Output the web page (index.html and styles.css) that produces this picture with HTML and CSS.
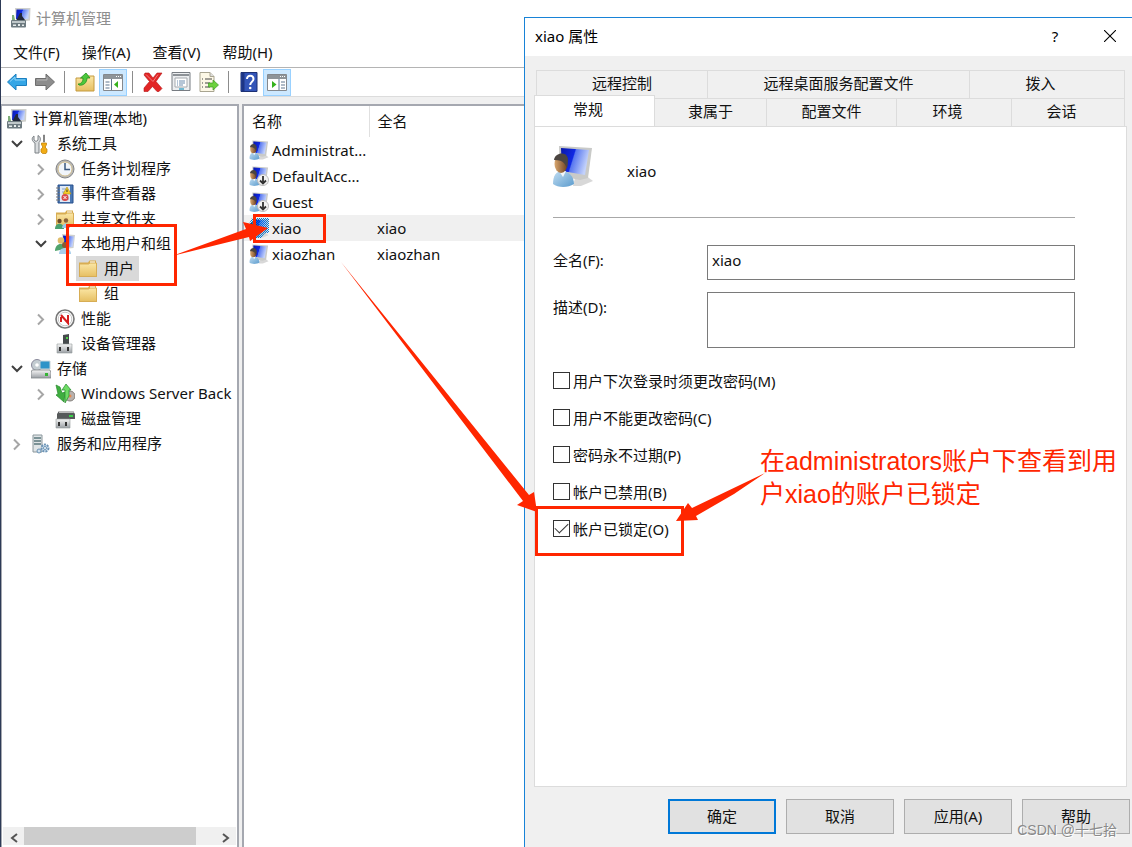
FILE: index.html
```html
<!DOCTYPE html>
<html lang="zh-CN">
<head>
    <meta charset="UTF-8">
    <meta name="viewport" content="width=device-width, initial-scale=1.0">
    <title>计算机管理</title>
    <link rel="stylesheet" href="styles.css">
</head>
<body>
    <!-- Shared icons -->
    <svg class="sprite" aria-hidden="true">
        <defs>
            <linearGradient id="screen" x1="0" y1="0" x2="1" y2="0.3">
                <stop offset="0" stop-color="#0a18a8"/>
                <stop offset="0.48" stop-color="#1029e4"/>
                <stop offset="0.52" stop-color="#5877f0"/>
                <stop offset="1" stop-color="#c3d2fb"/>
            </linearGradient>
            <linearGradient id="gold" x1="0" y1="0" x2="0" y2="1">
                <stop offset="0" stop-color="#fbe7a6"/>
                <stop offset="1" stop-color="#e6bf62"/>
            </linearGradient>
            <linearGradient id="steel" x1="0" y1="0" x2="0" y2="1">
                <stop offset="0" stop-color="#f6f6f6"/>
                <stop offset="1" stop-color="#9a9fa4"/>
            </linearGradient>
            <linearGradient id="skin" x1="0" y1="0" x2="1" y2="0">
                <stop offset="0" stop-color="#d9a76f"/>
                <stop offset="1" stop-color="#6b4020"/>
            </linearGradient>
            <linearGradient id="shirt" x1="0" y1="0" x2="1" y2="1">
                <stop offset="0" stop-color="#c2def2"/>
                <stop offset="1" stop-color="#5b9bcd"/>
            </linearGradient>
            <pattern id="dots" width="2" height="2" patternUnits="userSpaceOnUse">
                <path d="M0 0h1v1H0zM1 1h1v1H1z" fill="#0078d7"/>
            </pattern>
            <symbol id="i-computer" viewBox="0 0 20 20">
                <path d="M4 0h15.500l-.5 12.500-4 .5v3H8l-3-4z" fill="#cfd0cc"/>
                <path d="M5.500 1.500H18l-.6 9.500H5z" fill="url(#screen)"/>
                <path d="M9 5h2v3l3 4H8l-3 1z" fill="#23283a"/>
                <path d="M1 7h2l1 5H1z" fill="#7fae78"/>
                <rect y="12" width="15" height="7.500" rx="1" fill="#6d7a80"/>
                <path d="M1 13h13v2H1z" fill="#c0c8ca"/>
                <path d="M2 16.500h3v1.500H2zM7 16h2v2H7zM11 16.500h2v1.500h-2z" fill="#e9eeee"/>
            </symbol>
            <symbol id="i-user" viewBox="0 0 40 42">
                <path d="M22 33l10-3 8 6-12 5H20z" fill="#d8d8d8"/>
                <path d="M6 1l33 2-4 30-8 2-20-4z" fill="#c9cac8"/>
                <path d="M8 3l28 2-4 25-23-4z" fill="url(#screen)"/>
                <path d="M0 39c0-8 3-13 9-13s12 5 12 13c-6 4-16 4-21 0z" fill="url(#shirt)"/>
                <path d="M6 26l4 6 3-6z" fill="#f4f8fb"/>
                <ellipse cx="8" cy="19" rx="6.500" ry="9" fill="url(#skin)"/>
                <path d="M1 15c1-8 14-9 14 0l-1 8c-2-3-2-8-13-8z" fill="#4b4540"/>
            </symbol>
            <symbol id="i-down" viewBox="0 0 20 20">
                <circle cx="14" cy="14" r="5.500" fill="#f3f3f3" stroke="#bcbcbc"/>
                <path d="M14 10v7M11 14.500l3 3 3-3" fill="none" stroke="#333" stroke-width="1.800"/>
            </symbol>
            <symbol id="i-picked" viewBox="0 0 20 20">
                <path d="M3 0h17v15h-4l-4 5H0V6z" fill="url(#dots)"/>
            </symbol>
            <symbol id="i-tools" viewBox="0 0 20 20">
                <path d="M3 2v4l2 1.500L7 6V1.500c3 1.500 3 5 1 7V19H4V9C1 7.500 0 4 3 2z" fill="#d9dcde" stroke="#7d8286"/>
                <path d="M12.500 1l1 0v7h-1z" fill="#777" stroke="#777" stroke-width=".8"/>
                <path d="M10.500 9h5v2l-1 1v2l1.500 1v3l-1 1.500h-3.500L10 18v-3l1.500-1v-2l-1-1z" fill="#f2ac14" stroke="#b97c08" stroke-width=".7"/>
            </symbol>
            <symbol id="i-clock" viewBox="0 0 20 20">
                <circle cx="10" cy="10" r="9" fill="#b9b9b9" stroke="#858585"/>
                <circle cx="10" cy="10" r="7" fill="#f1f5fa" stroke="#d0b77a" stroke-width=".8"/>
                <path d="M10 4v6.500h5" fill="none" stroke="#3a587f" stroke-width="1.500"/>
            </symbol>
            <symbol id="i-event" viewBox="0 0 20 20">
                <path d="M3 1h15v18H3z" fill="#4a78b4" stroke="#274f8b"/>
                <path d="M5 2h10v16H5z" fill="#dfe9f7"/>
                <path d="M1 4h4M1 7h4M1 10h4M1 13h4M1 16h4" stroke="#777"/>
                <path d="M7 5h6M7 8h6M7 15h7" stroke="#8ba4c4"/>
                <path d="M12 3l4 7H8z" fill="#f8cf2a" stroke="#b28d10" stroke-width=".6"/>
                <path d="M12 5.500v2.500" stroke="#333"/>
                <circle cx="10" cy="13.500" r="3.500" fill="#d94b4b"/>
                <path d="M8.500 12l3 3m0-3l-3 3" stroke="#fff"/>
            </symbol>
            <symbol id="i-folder" viewBox="0 0 20 20">
                <path d="M1 3.500h9l1.500-2H18v3h1V18H1z" fill="#d9ae51"/>
                <path d="M12 2.500h5v2h-5z" fill="#fff"/>
                <path d="M1.500 5h9l1.500-1h6.500v13.500h-17z" fill="url(#gold)" stroke="#d7ad55"/>
            </symbol>
            <symbol id="i-people" viewBox="0 0 20 20">
                <circle cx="4.500" cy="12" r="2.200" fill="#6e4c2a"/>
                <path d="M0 20c0-7 9-7 9 0z" fill="#49a06f"/>
                <circle cx="11" cy="11.500" r="2.200" fill="#8a6238"/>
                <path d="M7 19c0-6 8-6 8 0z" fill="#9cc6e6"/>
            </symbol>
            <symbol id="i-group" viewBox="0 0 20 20">
                <path d="M7 0l13 1-1.500 13-9 1z" fill="#cfd0ce"/>
                <path d="M8 1.500l11 1-1.500 10.500-8 0z" fill="url(#screen)"/>
                <circle cx="6" cy="6.500" r="3.300" fill="#e0bd6c"/>
                <path d="M0 17c0-9 10-9 10-2z" fill="#4fa36d"/>
                <circle cx="10" cy="11" r="3" fill="#8a5b35"/>
                <path d="M4 20c0-8 12-8 12 0z" fill="#a8cfec"/>
            </symbol>
            <symbol id="i-gauge" viewBox="0 0 20 20">
                <circle cx="10" cy="10" r="9" fill="#fff" stroke="#777" stroke-width="1.600"/>
                <circle cx="10" cy="10" r="6.800" fill="#fff" stroke="#c6c6c6"/>
                <path d="M6 13V8M6 6l7 8V6" fill="none" stroke="#d61c1c" stroke-width="2"/>
            </symbol>
            <symbol id="i-device" viewBox="0 0 20 20">
                <path d="M8 1l6-1v10H8z" fill="#454a4c"/>
                <path d="M11 3h2v2h-2z" fill="#4ed04b"/>
                <path d="M2 10h15v9H2z" fill="url(#steel)" stroke="#969a9c" stroke-width=".6"/>
                <path d="M4 13h2v4H4zM12 13h2v4h-2z" fill="#333"/>
            </symbol>
            <symbol id="i-storage" viewBox="0 0 20 20">
                <circle cx="6" cy="6" r="5.500" fill="#c3ccd1" stroke="#889"/>
                <circle cx="6" cy="6" r="1.800" fill="#fff"/>
                <path d="M9 2h10v8H9z" fill="#2d93c8" stroke="#c8d4da"/>
                <path d="M1 11h18l1 3v5H0v-5z" fill="url(#steel)" stroke="#84898c" stroke-width=".8"/>
                <path d="M14 14h3v3h-3z" fill="#36b436"/>
            </symbol>
            <symbol id="i-backup" viewBox="0 0 20 20">
                <circle cx="15" cy="12" r="5" fill="#b8b1ae" stroke="#84807c"/>
                <circle cx="15" cy="12" r="1.500" fill="#e98a4e"/>
                <path d="M1 1l4 2 2 6 3-1-1 10-8-7 2-1z" fill="#3fae40" stroke="#278b2b" stroke-width=".7"/>
                <path d="M11 0l5 6h-2v6l-4 7V6H7z" fill="#6fdc66" stroke="#278b2b" stroke-width=".7"/>
            </symbol>
            <symbol id="i-disk" viewBox="0 0 20 20">
                <path d="M4 2h14l2 3v5H2V5z" fill="#56595a"/>
                <path d="M4 2h14l1 2H4z" fill="#bbb"/>
                <path d="M14 6h4v2h-4z" fill="#3bd04a"/>
                <path d="M1 10h14v9H1z" fill="url(#steel)" stroke="#969a9c" stroke-width=".6"/>
                <path d="M3 13h2v4H3zM10 13h2v4h-2z" fill="#333"/>
            </symbol>
            <symbol id="i-service" viewBox="0 0 20 20">
                <path d="M2 1h9v17H2z" fill="#dfe4e6" stroke="#8b979c"/>
                <path d="M3 4h7M3 7h7M3 10h7" stroke="#5b777c" stroke-width="1.400"/>
                <circle cx="14" cy="14" r="3.500" fill="#cfe0ee" stroke="#6b93b5" stroke-width="2" stroke-dasharray="2 1"/>
                <circle cx="14" cy="14" r="1.500" fill="#fff" stroke="#6b93b5"/>
                <circle cx="8" cy="17" r="2" fill="#cfe0ee" stroke="#6b93b5"/>
            </symbol>
            <symbol id="i-open" viewBox="0 0 20 20">
                <path d="M5 7l5 5 5-5" fill="none" stroke="#404040" stroke-width="2"/>
            </symbol>
            <symbol id="i-closed" viewBox="0 0 20 20">
                <path d="M7 5.500l5 5-5 5" fill="none" stroke="#a6a6a6" stroke-width="2"/>
            </symbol>
        </defs>
    </svg>

    <main class="console">
        <header class="console-title">
            <svg class="icon"><use href="#i-computer"/></svg>
            <span>计算机管理</span>
        </header>

        <nav class="menu">
            <button type="button">文件(F)</button>
            <button type="button">操作(A)</button>
            <button type="button">查看(V)</button>
            <button type="button">帮助(H)</button>
        </nav>

        <div class="toolbar">
            <button type="button" aria-label="后退">
                <svg class="icon" viewBox="0 0 20 20"><path d="M.5 10L9 2v4.500h10.500v7H9V18z" fill="#35a6e6" stroke="#1b7fc0"/><path d="M3 9.500L8 5v3h10" fill="none" stroke="#8fd4f7"/></svg>
            </button>
            <button type="button" aria-label="前进">
                <svg class="icon" viewBox="0 0 20 20"><path d="M19.500 10L11 2v4.500H.5v7H11V18z" fill="#8d8d8d" stroke="#6e6e6e"/><path d="M2 8h10V5" fill="none" stroke="#b5b5b5"/></svg>
            </button>
            <i class="divider"></i>
            <button type="button" aria-label="上一级">
                <svg class="icon" viewBox="0 0 20 20"><path d="M1 6h8l2-2h8v15H1z" fill="url(#gold)" stroke="#c49a3e"/><path d="M3 12c3 0 5-2 5-6H5.500L11 1l4 5h-3c0 5-4 8-8 7z" fill="#4cc83c" stroke="#248f20" stroke-width=".8"/></svg>
            </button>
            <button type="button" class="active" aria-label="显示控制台树">
                <svg class="icon" viewBox="0 0 20 20"><path d="M.5 2.500h19v16H.5z" fill="#fff" stroke="#84888d"/><path d="M1 3h18v4H1z" fill="#8e9499"/><path d="M13 4.500h1m1 0h1m1 0h1" stroke="#fff"/><path d="M8.500 7v11M2.500 10h4M2.500 13h4M2.500 16h4" stroke="#5f7691"/><path d="M15 9v7l-4-3.500z" fill="#35b21c"/></svg>
            </button>
            <i class="divider"></i>
            <button type="button" aria-label="删除">
                <svg class="icon" viewBox="0 0 20 20"><path d="M2 1h4l4 5 4-5h5l-6 8.500 6 7-3 3h-2l-4.500-5L5 19.500H1V16l5.500-6.500L1 3z" fill="#e22525" stroke="#b51616" stroke-width=".6"/><path d="M3 2.500l7 7 5-7" fill="none" stroke="#f47c7c"/></svg>
            </button>
            <button type="button" aria-label="属性">
                <svg class="icon" viewBox="0 0 20 20"><path d="M1 .5h18v18H1z" fill="#eceef0" stroke="#777c82"/><path d="M2 3h16" stroke="#8d9297" stroke-width="2"/><path d="M4 6h12v9H4z" fill="#fff" stroke="#a4a9ae"/><path d="M6 9h1m1 0h6M6 11h1m1 0h6M6 13h1m1 0h4" stroke="#6c8cae"/><path d="M8 17h5" stroke="#4aa7c9" stroke-width="1.500"/></svg>
            </button>
            <button type="button" aria-label="导出列表">
                <svg class="icon" viewBox="0 0 20 20"><path d="M1 .5h10l4 4v15H1z" fill="#fdf8e6" stroke="#a9a591"/><path d="M11 .5v4h4" fill="#ddd" stroke="#a9a591"/><path d="M3 7h1m2 0h7M3 11h1m2 0h5M3 15h1m2 0h5" stroke="#444"/><path d="M9.500 11H14V8l5.500 5L14 18v-3H9.500z" fill="#6cd13d" stroke="#3c9a22" stroke-width=".7"/></svg>
            </button>
            <i class="divider"></i>
            <button type="button" aria-label="帮助">
                <svg class="icon" viewBox="0 0 20 20"><path d="M2 .5h16v19H2z" fill="#3355b8" stroke="#1d3175"/><path d="M2.500 1h3v18h-3z" fill="#1d3585"/><path d="M8 7c0-4.500 6.500-4 6.500 0 0 3-3.300 2.500-3.300 6" fill="none" stroke="#fff" stroke-width="2"/><circle cx="11.200" cy="16" r="1.300" fill="#fff"/></svg>
            </button>
            <button type="button" class="active" aria-label="显示操作窗格">
                <svg class="icon" viewBox="0 0 20 20"><path d="M.5 2.500h19v16H.5z" fill="#fff" stroke="#84888d"/><path d="M1 3h18v4H1z" fill="#8e9499"/><path d="M13 4.500h1m1 0h1m1 0h1" stroke="#fff"/><path d="M12 7v11M14 10h4M14 13h4M14 16h4" stroke="#5f7691"/><path d="M5 9v7l4.500-3.500z" fill="#35b21c"/></svg>
            </button>
        </div>

        <div class="panes">
            <section class="tree-pane">
                <ul class="tree">
                    <li class="root"><svg class="icon"><use href="#i-computer"/></svg><span>计算机管理(本地)</span></li>
                    <li class="l1"><svg class="chevron"><use href="#i-open"/></svg><svg class="icon"><use href="#i-tools"/></svg><span>系统工具</span></li>
                    <li class="l2"><svg class="chevron"><use href="#i-closed"/></svg><svg class="icon"><use href="#i-clock"/></svg><span>任务计划程序</span></li>
                    <li class="l2"><svg class="chevron"><use href="#i-closed"/></svg><svg class="icon"><use href="#i-event"/></svg><span>事件查看器</span></li>
                    <li class="l2"><svg class="chevron"><use href="#i-closed"/></svg><svg class="icon"><use href="#i-folder"/><use href="#i-people"/></svg><span>共享文件夹</span></li>
                    <li class="l2"><svg class="chevron"><use href="#i-open"/></svg><svg class="icon"><use href="#i-group"/></svg><span>本地用户和组</span></li>
                    <li class="l3"><a class="selected" href="#users"><svg class="icon"><use href="#i-folder"/></svg><span>用户</span></a></li>
                    <li class="l3"><a href="#groups"><svg class="icon"><use href="#i-folder"/></svg><span>组</span></a></li>
                    <li class="l2"><svg class="chevron"><use href="#i-closed"/></svg><svg class="icon"><use href="#i-gauge"/></svg><span>性能</span></li>
                    <li class="l2"><svg class="chevron"></svg><svg class="icon"><use href="#i-device"/></svg><span>设备管理器</span></li>
                    <li class="l1"><svg class="chevron"><use href="#i-open"/></svg><svg class="icon"><use href="#i-storage"/></svg><span>存储</span></li>
                    <li class="l2"><svg class="chevron"><use href="#i-closed"/></svg><svg class="icon"><use href="#i-backup"/></svg><span>Windows Server Back</span></li>
                    <li class="l2"><svg class="chevron"></svg><svg class="icon"><use href="#i-disk"/></svg><span>磁盘管理</span></li>
                    <li class="l1"><svg class="chevron"><use href="#i-closed"/></svg><svg class="icon"><use href="#i-service"/></svg><span>服务和应用程序</span></li>
                </ul>
                <div class="scrollbar">
                    <button type="button" aria-label="向左滚动"><svg viewBox="0 0 10 10"><path d="M8 1L3 5l5 4" fill="none" stroke="#555" stroke-width="2"/></svg></button>
                    <div class="track"><div class="thumb"></div></div>
                    <button type="button" aria-label="向右滚动"><svg viewBox="0 0 10 10"><path d="M2 1l5 4-5 4" fill="none" stroke="#555" stroke-width="2"/></svg></button>
                </div>
            </section>

            <section class="list-pane">
                <table class="users">
                    <thead>
                        <tr><th class="col-name">名称</th><th>全名</th></tr>
                    </thead>
                    <tbody>
                        <tr><td><div class="user"><svg class="icon"><use href="#i-user"/></svg>Administrat...</div></td><td></td></tr>
                        <tr><td><div class="user"><svg class="icon"><use href="#i-user"/><use href="#i-down"/></svg>DefaultAcc...</div></td><td></td></tr>
                        <tr><td><div class="user"><svg class="icon"><use href="#i-user"/><use href="#i-down"/></svg>Guest</div></td><td></td></tr>
                        <tr class="current"><td><div class="user"><svg class="icon"><use href="#i-user"/><use href="#i-picked"/></svg>xiao</div></td><td>xiao</td></tr>
                        <tr><td><div class="user"><svg class="icon"><use href="#i-user"/></svg>xiaozhan</div></td><td>xiaozhan</td></tr>
                    </tbody>
                </table>
            </section>
        </div>
    </main>

    <form class="dialog" role="dialog" aria-labelledby="dialog-title">
        <header class="dialog-title">
            <h1 id="dialog-title">xiao 属性</h1>
            <button type="button" class="help">?</button>
            <button type="button" class="close" aria-label="关闭"><svg viewBox="0 0 12 12"><path d="M0 0l12 12M12 0L0 12" stroke="#000" stroke-width="1.100"/></svg></button>
        </header>

        <div class="tabs" role="tablist">
            <div class="tab-row back">
                <button type="button" role="tab">远程控制</button>
                <button type="button" role="tab">远程桌面服务配置文件</button>
                <button type="button" role="tab" class="short">拨入</button>
            </div>
            <div class="tab-row front">
                <button type="button" role="tab" class="short tab-on" aria-selected="true">常规</button>
                <button type="button" role="tab">隶属于</button>
                <button type="button" role="tab">配置文件</button>
                <button type="button" role="tab" class="short">环境</button>
                <button type="button" role="tab" class="short">会话</button>
            </div>
        </div>

        <section class="panel">
            <div class="identity">
                <svg class="avatar"><use href="#i-user"/></svg>
                <span>xiao</span>
            </div>
            <div class="fields">
                <label for="full-name">全名(F):</label>
                <input type="text" id="full-name" value="xiao">
                <label for="description">描述(D):</label>
                <textarea id="description"></textarea>
            </div>
            <div class="options">
                <label><input type="checkbox">用户下次登录时须更改密码(M)</label>
                <label><input type="checkbox">用户不能更改密码(C)</label>
                <label><input type="checkbox">密码永不过期(P)</label>
                <label><input type="checkbox">帐户已禁用(B)</label>
                <label><input type="checkbox" checked>帐户已锁定(O)</label>
            </div>
        </section>

        <footer class="actions">
            <button type="submit" class="default">确定</button>
            <button type="button">取消</button>
            <button type="button">应用(A)</button>
            <button type="button">帮助</button>
        </footer>
    </form>

    <!-- Red marks drawn over both windows -->
    <svg class="marks" width="800" height="600" viewBox="0 0 800 600" aria-hidden="true">
        <g fill="none" stroke="#ff2600" stroke-width="3">
            <rect x="67.500" y="225.500" width="108" height="59"/>
            <rect x="254.500" y="215.500" width="70" height="26"/>
            <rect x="536.500" y="507.500" width="146" height="47"/>
        </g>
        <g fill="#ff2600">
            <path d="M172 256L246 229l-3-7 25 6-18 13-1-4z"/>
            <path d="M341 262L529 495l5-3 3 20-20-7 6-4z"/>
            <path d="M765 473L692 508l-4-5-12 18 22-1-2-4 38-22z"/>
        </g>
    </svg>
    <p class="note">在administrators账户下查看到用<br>户xiao的账户已锁定</p>
    <span class="watermark">CSDN @十七拾</span>
</body>
</html>
```
FILE: styles.css
```css
* {
    box-sizing: border-box;
}
body {
    margin: 0;
    height: 100vh;
    overflow: hidden;
    position: relative;
    font-family: "Noto Sans", "Noto Sans CJK SC", sans-serif;
    font-size: 15px;
    line-height: 20px;
    color: #111;
    background-color: #fff;
}
button, input, textarea {
    font: inherit;
    color: inherit;
}
button {
    padding: 0;
    border: none;
    background: none;
}
.sprite {
    position: absolute;
    width: 0;
    height: 0;
}
.icon, .chevron {
    width: 20px;
    height: 20px;
    flex: none;
}

/* Console window */
.console {
    height: 100vh;
    display: flex;
    flex-direction: column;
    border-left: 1px solid #2d3a56;
}
.console-title {
    display: flex;
    align-items: center;
    gap: 5px;
    height: 36px;
    padding: 0 10px;
    color: #8e8e8e;
}
.menu {
    display: flex;
    gap: 22px;
    height: 32px;
    padding: 0 12px;
    border-bottom: 1px solid #b4b4b4;
}
.toolbar {
    display: flex;
    align-items: center;
    height: 29px;
    padding-left: 2px;
    border-bottom: 1px solid #dcdcdc;
}
.toolbar button {
    display: flex;
    align-items: center;
    justify-content: center;
    width: 28px;
    height: 27px;
}
.toolbar .active {
    background-color: #cce8ff;
    border: 1px solid #99d1ff;
}
.divider {
    width: 1px;
    height: 22px;
    margin: 0 6px 0 5px;
    background-color: #8c8c8c;
}
.panes {
    flex: 1;
    min-height: 0;
    display: grid;
    grid-template-columns: 238px 1fr;
    gap: 3px;
    padding-top: 7px;
    background-color: #f0f0f0;
}
.tree-pane, .list-pane {
    background-color: #fff;
    border: 2px solid #a5a8b0;
    border-bottom: none;
    overflow: hidden;
}
.tree-pane {
    display: flex;
    flex-direction: column;
    border-left-width: 1px;
}
.tree {
    flex: 1;
    list-style: none;
    margin: 0;
    padding: 0;
}
.tree li {
    display: flex;
    align-items: center;
    gap: 4px;
    height: 25px;
    white-space: nowrap;
}
.tree span {
    padding: 0 0 1px 2px;
}
.tree .root {
    padding-left: 5px;
}
.tree .l1 {
    padding-left: 5px;
}
.tree .l2 {
    padding-left: 29px;
}
.tree .l3 {
    padding-left: 74px;
}
.tree a {
    display: flex;
    align-items: center;
    gap: 4px;
    height: 25px;
    padding: 0 5px 0 2px;
    color: inherit;
    text-decoration: none;
}
.tree .selected {
    background-color: #d9d9d9;
}
.scrollbar {
    display: flex;
    height: 18px;
    margin: 0 1px 2px;
    background-color: #f0f0f0;
}
.scrollbar button {
    width: 21px;
}
.scrollbar svg {
    width: 10px;
    height: 10px;
}
.track {
    flex: 1;
}
.thumb {
    width: 90%;
    height: 100%;
    background-color: #cdcdcd;
}

/* User list */
.users {
    width: 100%;
    border-collapse: collapse;
    table-layout: fixed;
}
.users th {
    height: 31px;
    padding: 0 8px 2px;
    font-weight: normal;
    text-align: left;
}
.users .col-name {
    width: 125px;
    border-right: 1px solid #e0e0e0;
}
.users td {
    height: 26px;
    padding: 0 8px;
}
.users td:first-child {
    padding: 0 0 0 5px;
}
.user {
    display: flex;
    align-items: center;
    gap: 3px;
    white-space: nowrap;
}
.current {
    background-color: #f0f0f0;
}

/* Properties dialog */
.dialog {
    position: absolute;
    top: 17px;
    left: 524px;
    right: 0;
    bottom: 0;
    display: flex;
    flex-direction: column;
    background-color: #f0f0f0;
    border-top: 1px solid #1883d7;
    border-left: 1px solid #1883d7;
}
.dialog-title {
    display: flex;
    align-items: center;
    height: 38px;
    padding: 0 0 2px 10px;
    background-color: #fff;
    color: #000;
}
.dialog-title h1 {
    flex: 1;
    margin: 0;
    font-size: 15px;
    font-weight: normal;
}
.dialog-title button {
    width: 45px;
    height: 36px;
}
.dialog-title .help {
    width: 64px;
}
.dialog-title svg {
    width: 12px;
    height: 12px;
}
.tabs {
    margin: 14px 5px 0 9px;
}
.tab-row {
    display: grid;
}
.tab-row.back {
    grid-template-columns: 172fr 262fr 155fr;
    margin: 0 2px;
}
.tab-row.front {
    grid-template-columns: 121fr 112fr 130fr 115fr 113fr;
    margin-right: 2px;
}
.tab-row button {
    height: 28px;
    padding-bottom: 3px;
    border: 1px solid #dcdcdc;
    border-width: 1px 1px 0 0;
}
.tab-row .short {
    padding-right: 13px;
}
.tab-row.back button:first-child {
    border-left-width: 1px;
}
.tab-row .tab-on {
    height: 31px;
    margin: -3px 0 -1px;
    padding-bottom: 5px;
    border-left-width: 1px;
    background-color: #fff;
    position: relative;
}
.panel {
    flex: 1;
    margin: 0 5px 0 9px;
    padding: 18px 51px 0 18px;
    background-color: #fff;
    border: 1px solid #dcdcdc;
}
.identity {
    display: flex;
    align-items: flex-start;
    gap: 34px;
    height: 73px;
    line-height: 52px;
    border-bottom: 1px solid #a8a8a8;
    margin-bottom: 27px;
}
.avatar {
    width: 40px;
    height: 42px;
}
.fields {
    display: grid;
    grid-template-columns: 154px 1fr;
    row-gap: 12px;
}
.fields label {
    padding-top: 5px;
}
.fields input, .fields textarea {
    display: block;
    width: 100%;
    height: 35px;
    padding: 0 4px 6px;
    border: 1px solid #7a7a7a;
    border-radius: 0;
    background-color: #fff;
    resize: none;
}
.fields textarea {
    height: 56px;
}
.options {
    padding-top: 14px;
}
.options label {
    display: flex;
    align-items: center;
    gap: 3px;
    height: 37px;
}
.options input {
    appearance: none;
    width: 17px;
    height: 17px;
    margin: 0;
    border: 1px solid #333;
    background-color: #fff;
}
.options input:checked {
    display: grid;
    place-items: center;
}
.options input:checked::before {
    content: "";
    width: 12px;
    height: 6px;
    margin-bottom: 4px;
    border: solid #333;
    border-width: 0 0 1px 1px;
    transform: rotate(-45deg);
}
.actions {
    display: flex;
    justify-content: flex-end;
    gap: 10px;
    padding: 12px 2px 13px;
}
.actions button {
    width: 108px;
    height: 35px;
    padding-bottom: 2px;
    background-color: #e1e1e1;
    border: 1px solid #adadad;
}
.actions .default {
    border: 2px solid #0078d7;
}

/* Annotations */
.marks {
    position: absolute;
    top: 0;
    left: 0;
    pointer-events: none;
}
.note {
    position: absolute;
    top: 445px;
    left: 760px;
    margin: 0;
    font-family: "Liberation Sans", "Noto Sans CJK SC", sans-serif;
    font-size: 25px;
    line-height: 33px;
    color: #ff2600;
    white-space: nowrap;
}
.watermark {
    position: absolute;
    right: 15px;
    bottom: 7px;
    font-family: "Liberation Sans", "Noto Sans CJK SC", sans-serif;
    font-size: 14px;
    color: #8a8a8a;
    text-shadow: 1px 1px 0 #fff;
}
```
